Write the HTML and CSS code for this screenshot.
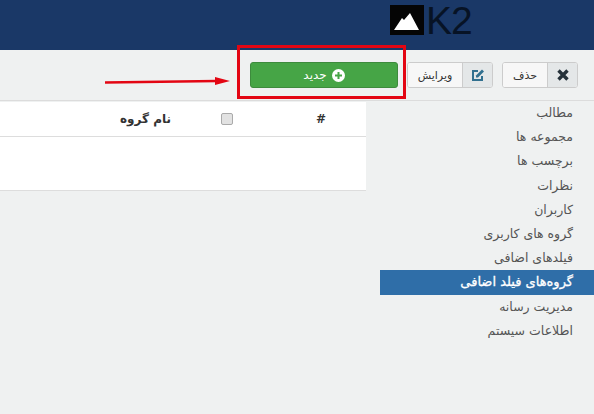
FILE: index.html
```html
<!DOCTYPE html>
<html lang="fa" dir="rtl">
<head>
    <meta charset="UTF-8">
    <meta name="viewport" content="width=device-width, initial-scale=1.0">
    <title>K2</title>
    <link rel="stylesheet" href="styles.css">
</head>
<body>
    <header class="top-bar">
        <div class="logo" dir="ltr">
            <svg class="logo-mark" width="34" height="30" viewBox="0 0 34 30">
                <rect width="34" height="30" fill="#050505"/>
                <path d="M4 25 L12 13 L14 15 L20 8 L29 25 Z" fill="#fff"/>
            </svg>
            <span class="logo-text">K2</span>
        </div>
    </header>

    <div class="toolbar">
        <button class="btn">
            <span class="btn-icon">
                <svg width="14" height="14" viewBox="0 0 14 14">
                    <path d="M2.5 2.5 L11.5 11.5 M11.5 2.5 L2.5 11.5" stroke="#26323a" stroke-width="3.4" fill="none"/>
                </svg>
            </span>
            <span class="btn-label">حذف</span>
        </button>
        <button class="btn">
            <span class="btn-icon">
                <svg width="14" height="14" viewBox="0 0 14 14">
                    <path d="M11 8 V12 H2 V3 H7" stroke="#31708f" stroke-width="2" fill="none"/>
                    <path d="M5 7.5 L11 1.5 L13 3.5 L7 9.5 H5 Z" fill="#31708f"/>
                </svg>
            </span>
            <span class="btn-label">ویرایش</span>
        </button>
        <button class="btn-new">
            <svg width="13" height="13" viewBox="0 0 13 13">
                <circle cx="6.5" cy="6.5" r="6.5" fill="#fff"/>
                <path d="M3 6.5 H10 M6.5 3 V10" stroke="#46a546" stroke-width="2"/>
            </svg>
            <span>جدید</span>
        </button>
    </div>

    <div class="content">
        <ul class="side-menu">
            <li>مطالب</li>
            <li>مجموعه ها</li>
            <li>برچسب ها</li>
            <li>نظرات</li>
            <li>کاربران</li>
            <li>گروه های کاربری</li>
            <li>فیلدهای اضافی</li>
            <li class="active">گروه‌های فیلد اضافی</li>
            <li>مدیریت رسانه</li>
            <li>اطلاعات سیستم</li>
        </ul>
        <div class="table-box">
            <div class="table-head">
                <span class="col-num">#</span>
                <span class="col-check"><span class="checkbox"></span></span>
                <span class="col-name">نام گروه</span>
            </div>
            <div class="table-body"></div>
        </div>
    </div>

    <!-- annotation drawn over the screenshot -->
    <div class="mark-box"></div>
    <svg class="mark-arrow" width="130" height="14" viewBox="0 0 130 14">
        <path d="M0 8.5 L112 7" stroke="#e30613" stroke-width="2.6" fill="none"/>
        <path d="M110 3 L125 7 L110 11 Z" fill="#e30613"/>
    </svg>
</body>
</html>
```

FILE: styles.css
```css
body {
    font-family: "DejaVu Sans", "Noto Sans", sans-serif;
    background-color: #eff1f1;
    margin: 0;
    height: 414px;
    overflow: hidden;
    position: relative;
    color: #555;
}

.top-bar {
    background-color: #1a3867;
    height: 50px;
    display: flex;
    justify-content: flex-end;
    padding-left: 390px;
    box-sizing: border-box;
}

.logo {
    display: flex;
    align-items: flex-start;
    width: 204px;
    padding-top: 5px;
    box-sizing: border-box;
}

.logo-text {
    font-family: "Liberation Sans", Arial, sans-serif;
    font-size: 39px;
    line-height: 32px;
    color: #071325;
    margin-left: 2px;
    letter-spacing: -1px;
}

.toolbar {
    height: 51px;
    display: flex;
    align-items: center;
    gap: 9px;
    padding: 0 16px;
    border-bottom: 1px solid #dcdcdc;
    box-sizing: border-box;
}

.btn {
    display: flex;
    align-items: stretch;
    height: 26px;
    padding: 0;
    font-family: inherit;
    font-size: 11px;
    color: #333;
    background-color: #fff;
    border: 1px solid #ccc;
    border-radius: 3px;
    overflow: hidden;
}

.btn-icon {
    width: 29px;
    display: flex;
    align-items: center;
    justify-content: center;
    background-color: #e4e7e8;
    border-left: 1px solid #ccc;
}

.btn-label {
    display: flex;
    align-items: center;
    justify-content: center;
    width: 44px;
    background-color: #f7f7f7;
}

.btn:nth-child(2) .btn-label {
    width: 54px;
}

.btn-new {
    width: 148px;
    height: 26px;
    display: flex;
    align-items: center;
    justify-content: center;
    gap: 5px;
    font-family: inherit;
    font-size: 12px;
    color: #fff;
    background-color: #46a546;
    border: 1px solid #3d8b3d;
    border-radius: 3px;
}

.content {
    display: flex;
    align-items: flex-start;
    gap: 14px;
}

.side-menu {
    width: 214px;
    list-style: none;
    margin: 0;
    padding: 0;
    flex-shrink: 0;
}

.side-menu li {
    height: 24.2px;
    line-height: 24px;
    padding-right: 21px;
    font-size: 12.5px;
    color: #555;
}

.side-menu li.active {
    background-color: #2f6ea8;
    color: #fff;
    font-size: 13px;
    -webkit-text-stroke: 0.3px #fff;
}

.table-box {
    width: 366px;
    margin-top: 1px;
    background-color: #fff;
    border-bottom: 1px solid #ddd;
}

.table-head {
    height: 35px;
    display: flex;
    align-items: center;
    border-bottom: 1px solid #ddd;
    box-sizing: border-box;
    font-size: 12px;
    font-weight: bold;
    color: #333;
}

.col-num {
    width: 90px;
    text-align: center;
}

.col-check {
    width: 98px;
    display: flex;
    justify-content: center;
}

.checkbox {
    width: 10px;
    height: 10px;
    background-color: #e2e2e2;
    border: 1px solid #aaa;
    border-radius: 2px;
}

.col-name {
    margin-right: 7px;
}

.table-body {
    height: 53px;
}

.mark-box {
    position: absolute;
    left: 237px;
    top: 45px;
    width: 169px;
    height: 54px;
    border: 3px solid #e30613;
    box-sizing: border-box;
}

.mark-arrow {
    position: absolute;
    left: 105px;
    top: 74px;
}
```
